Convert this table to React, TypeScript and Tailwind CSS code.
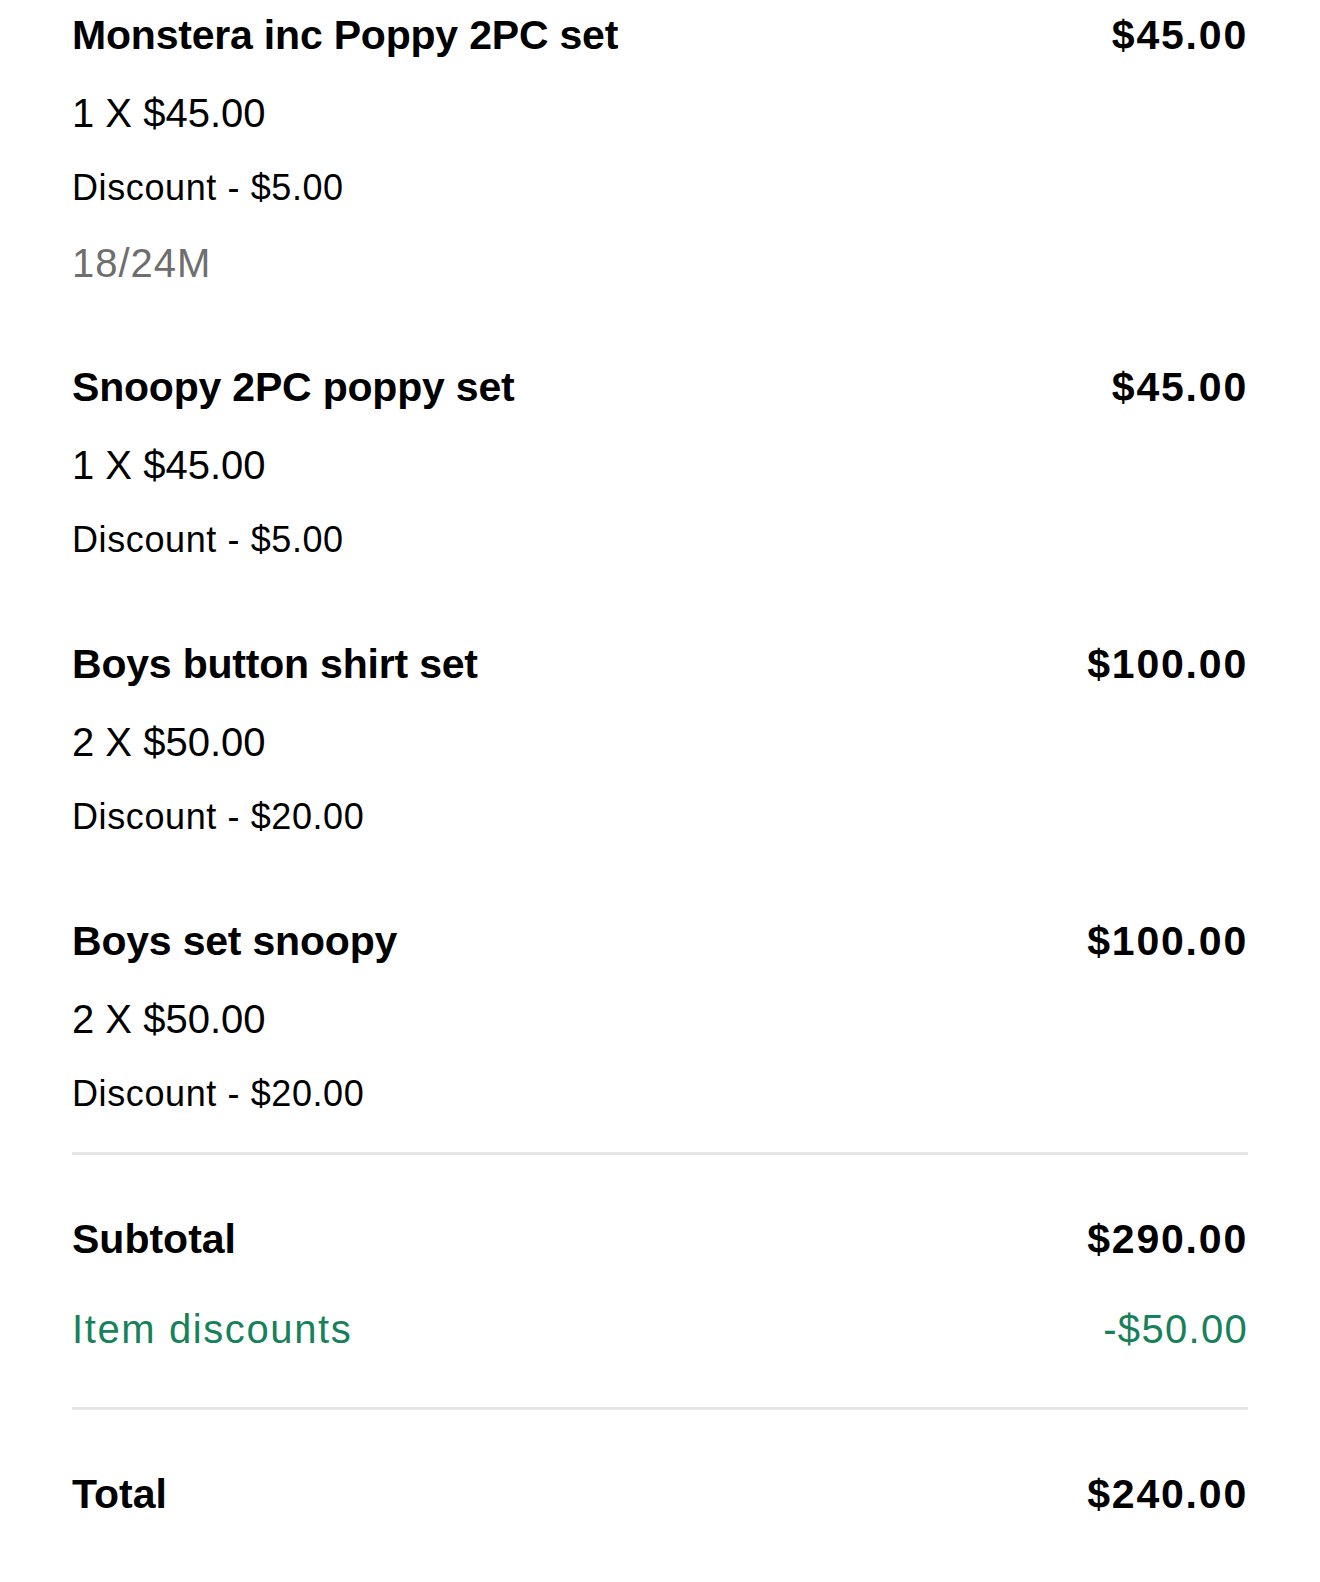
import React from "react";

type Item = {
  name: string;
  price: string;
  qty: string;
  discount: string;
  size?: string;
};

const items: Item[] = [
  { name: "Monstera inc Poppy 2PC set", price: "$45.00", qty: "1 X $45.00", discount: "Discount - $5.00", size: "18/24M" },
  { name: "Snoopy 2PC poppy set", price: "$45.00", qty: "1 X $45.00", discount: "Discount - $5.00" },
  { name: "Boys button shirt set", price: "$100.00", qty: "2 X $50.00", discount: "Discount - $20.00" },
  { name: "Boys set snoopy", price: "$100.00", qty: "2 X $50.00", discount: "Discount - $20.00" },
];

function ItemBlock({ item }: { item: Item }) {
  return (
    <div className="flex flex-col">
      <div className="flex items-center justify-between h-[48px] mb-[30px]">
        <span className="text-[41px] font-bold text-black leading-[48px] tracking-[-0.2px]">{item.name}</span>
        <span className="text-[41px] font-bold text-black leading-[48px] tracking-[1.8px]">{item.price}</span>
      </div>
      <div className="flex flex-col gap-[27px]">
        <div className="h-[48px] flex items-center text-[40px] leading-[48px] text-black">{item.qty}</div>
        <div className="h-[48px] flex items-center text-[36px] leading-[48px] text-black tracking-[0.6px]">{item.discount}</div>
        {item.size && (
          <div className="h-[48px] flex items-center text-[40px] leading-[48px] text-[#6e6e6e] tracking-[1px]">{item.size}</div>
        )}
      </div>
    </div>
  );
}

export default function App() {
  return (
    <div
      className="w-[1320px] min-h-[1582px] bg-white px-[72px] pt-[11px] pb-[65px]"
      style={{ fontFamily: '"Liberation Sans", Arial, Helvetica, sans-serif' }}
    >
      <div className="flex flex-col gap-[76px]">
        {items.map((it) => (
          <ItemBlock key={it.name} item={it} />
        ))}
      </div>

      <div className="mt-[34px] h-[3px] bg-[#e6e6e6]" />

      <div className="mt-[60px] flex items-center justify-between h-[48px]">
        <span className="text-[41px] font-bold text-black leading-[48px]">Subtotal</span>
        <span className="text-[41px] font-bold text-black leading-[48px] tracking-[1.8px]">$290.00</span>
      </div>
      <div className="mt-[42px] flex items-center justify-between h-[48px]">
        <span className="text-[40px] text-[#16815a] leading-[48px] tracking-[1.6px]">Item discounts</span>
        <span className="text-[40px] text-[#16815a] leading-[48px] tracking-[1.3px]">-$50.00</span>
      </div>

      <div className="mt-[54px] h-[3px] bg-[#e6e6e6]" />

      <div className="mt-[60px] flex items-center justify-between h-[48px]">
        <span className="text-[41px] font-bold text-black leading-[48px]">Total</span>
        <span className="text-[41px] font-bold text-black leading-[48px] tracking-[1.8px]">$240.00</span>
      </div>
    </div>
  );
}
